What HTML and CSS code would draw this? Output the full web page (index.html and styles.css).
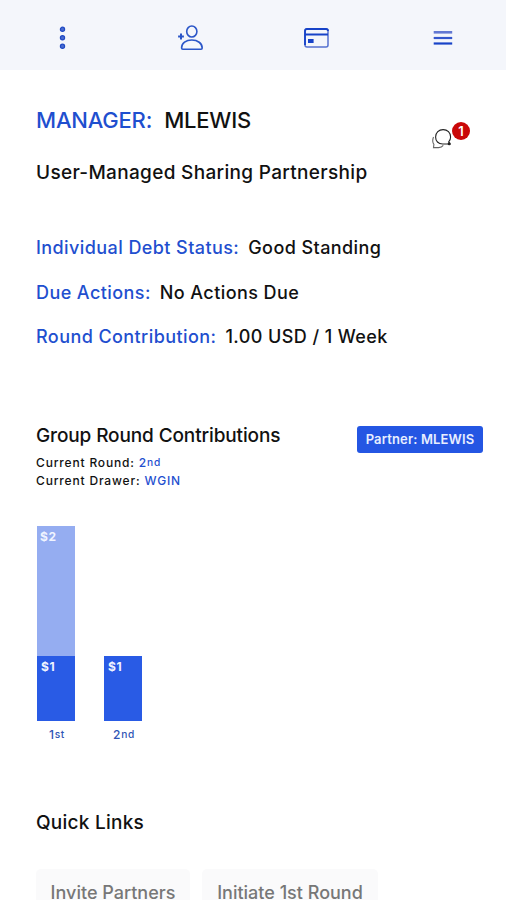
FILE: index.html
```html
<!DOCTYPE html>
<html lang="en">
<head>
  <meta charset="UTF-8" />
  <meta name="viewport" content="width=device-width, initial-scale=1.0" />
  <title>Sharing Partnership</title>
  <link rel="stylesheet" href="styles.css">
</head>
<body>
  <nav class="top-nav">
    <a class="nav-item">
      <svg width="24" height="30" viewBox="0 0 24 30" fill="#4a6ccf" stroke="#1f49c4" stroke-width="1.2">
        <circle cx="11.5" cy="6.3" r="2.1" />
        <circle cx="11.5" cy="14.8" r="2.1" />
        <circle cx="11.5" cy="23.3" r="2.1" />
      </svg>
    </a>
    <a class="nav-item">
      <svg width="30" height="30" viewBox="0 0 30 30" fill="none" stroke="#2b56c8" stroke-width="1.6">
        <ellipse cx="16.8" cy="8.5" rx="5.1" ry="5.5" />
        <path d="M6.6 25 C6.6 20.3 11 17 16.8 17 C22.6 17 27.2 20.3 27.2 25 Q27.2 26.2 26 26.2 H7.8 Q6.6 26.2 6.6 25 Z" />
        <path d="M6 10.6 V16.4 M3.1 13.5 H8.9" stroke-width="2" />
      </svg>
    </a>
    <a class="nav-item">
      <svg width="30" height="30" viewBox="0 0 30 30" fill="none">
        <rect x="4" y="6" width="23" height="18" rx="2" stroke="#5572d0" stroke-width="1.5" />
        <path d="M4 22 V8 Q4 6 6 6 H25 Q27 6 27 8 M4 11.5 H27" stroke="#1743c8" stroke-width="1.8" />
        <rect x="7" y="16" width="5.6" height="4" fill="#1743c8" />
      </svg>
    </a>
    <a class="nav-item">
      <svg width="30" height="30" viewBox="0 0 30 30">
        <path d="M5.7 9.3 H24.2" stroke="#6278d2" stroke-width="2.6" />
        <path d="M5.7 15 H24.2" stroke="#3356cc" stroke-width="2.2" />
        <path d="M5.7 20.5 H24.2" stroke="#1743c8" stroke-width="2.2" />
      </svg>
    </a>
  </nav>

  <main class="content">
    <header class="group-header">
      <div>
        <h1 class="manager"><span class="label">MANAGER:</span><span>MLEWIS</span></h1>
        <h2 class="group-type">User-Managed Sharing Partnership</h2>
      </div>
      <div class="messages">
        <svg width="22" height="22" viewBox="0 0 22 22" fill="none" stroke="#222" stroke-width="1.1">
          <path d="M18.8 17 H11.7 C7.2 17 4.6 14 4.6 10 C4.6 5.6 7.9 2.6 12.1 2.6 C16.4 2.6 19.6 5.8 19.6 10 C19.6 12 18.9 13.6 17.7 14.8 Z" />
          <path d="M2.5 10 C1.4 12.8 1.5 15.6 2.9 17.4 L2.5 20.6 H7.6 C9.7 20.6 11.4 19.6 12.3 18.4" stroke="#666" />
          <circle cx="18.2" cy="16.7" r="1" fill="#222" />
        </svg>
        <span class="badge">1</span>
      </div>
    </header>

    <section class="status">
      <p class="status-row"><span class="label">Individual Debt Status:</span><span>Good Standing</span></p>
      <p class="status-row"><span class="label">Due Actions:</span><span>No Actions Due</span></p>
      <p class="status-row"><span class="label">Round Contribution:</span><span>1.00 USD / 1 Week</span></p>
    </section>

    <section class="contributions">
      <div class="contributions-header">
        <div>
          <h3 class="section-title title-group">Group Round Contributions</h3>
          <p class="detail">Current Round: <span class="label">2<span class="ord">nd</span></span></p>
          <p class="detail">Current Drawer: <span class="label">WGIN</span></p>
        </div>
        <button class="partner">Partner: MLEWIS</button>
      </div>
      <div class="chart">
        <div class="column">
          <div class="bar bar-due">$2</div>
          <div class="bar bar-paid">$1</div>
          <div class="bar-label">1<span class="ord">st</span></div>
        </div>
        <div class="column">
          <div class="bar bar-paid">$1</div>
          <div class="bar-label">2<span class="ord">nd</span></div>
        </div>
      </div>
    </section>

    <section class="quick-links">
      <h3 class="section-title title-links">Quick Links</h3>
      <div class="links">
        <button class="link link-invite">Invite Partners</button>
        <button class="link link-initiate">Initiate 1st Round</button>
      </div>
    </section>
  </main>
</body>
</html>
```
FILE: styles.css
```css
* {
  box-sizing: border-box;
  margin: 0;
  padding: 0;
}
body {
  font-family: Inter, "Liberation Sans", sans-serif;
  font-weight: 500;
  background: #fff;
  color: #111;
  height: 900px;
  overflow: hidden;
  white-space: nowrap;
}
h1, h2, h3 {
  font-weight: 500;
}
button {
  font-family: inherit;
  border: none;
  cursor: pointer;
}
.label {
  color: #1f4fcf;
}
.top-nav {
  display: flex;
  height: 70px;
  padding-top: 23px;
  background: #f4f6fb;
}
.nav-item {
  flex: 1;
  text-align: center;
}
.nav-item svg {
  display: inline-block;
}
.content {
  padding: 35px 23px 0 36px;
}
.group-header {
  display: flex;
  justify-content: space-between;
}
.manager {
  display: flex;
  gap: 12px;
  font-size: 22px;
  line-height: 30px;
  letter-spacing: -0.2px;
}
.group-type {
  margin-top: 23px;
  font-size: 19px;
  line-height: 30px;
  letter-spacing: 0.32px;
}
.messages {
  display: flex;
  padding-top: 17px;
  margin-right: 13px;
}
.messages svg {
  margin-top: 5px;
}
.badge {
  width: 18px;
  height: 18px;
  border-radius: 50%;
  background: #c90808;
  color: #fff;
  font-size: 13px;
  font-weight: 600;
  line-height: 18px;
  text-align: center;
  margin-left: -1px;
}
.status {
  margin-top: 45px;
}
.status-row {
  display: flex;
  gap: 9px;
  height: 44.5px;
  font-size: 18px;
  line-height: 30px;
  letter-spacing: 0.42px;
}
.contributions {
  margin-top: 54px;
}
.contributions-header {
  display: flex;
  justify-content: space-between;
  align-items: flex-start;
}
.section-title {
  font-size: 19px;
  line-height: 30px;
}
.title-group {
  margin-bottom: 3px;
  letter-spacing: -0.12px;
}
.title-links {
  letter-spacing: 0.25px;
}
.detail {
  font-size: 12px;
  line-height: 18px;
  letter-spacing: 0.83px;
}
.ord {
  font-size: 0.85em;
  position: relative;
  top: -1px;
}
.partner {
  width: 126px;
  height: 27px;
  margin-top: 5px;
  border-radius: 3px;
  background: #2456e3;
  color: #e8eeff;
  font-size: 13px;
  font-weight: 600;
  letter-spacing: 0.15px;
}
.chart {
  display: flex;
  align-items: flex-end;
  gap: 29px;
  height: 222px;
  margin-top: 36px;
  padding-left: 1px;
}
.column {
  width: 38px;
}
.bar {
  padding: 3px 0 0 4px;
  color: #f0f4ff;
  font-size: 12px;
  font-weight: 700;
  line-height: 15px;
  letter-spacing: 0.7px;
}
.bar-due {
  height: 130px;
  padding-left: 3px;
  background: #95adf1;
}
.bar-paid {
  height: 65px;
  background: #295be5;
}
.bar-label {
  height: 27px;
  color: #2f55b5;
  font-size: 12px;
  line-height: 28px;
  padding-left: 2px;
  text-align: center;
  letter-spacing: 0.7px;
}
.quick-links {
  margin-top: 60px;
}
.links {
  display: flex;
  gap: 12px;
  margin-top: 31px;
}
.link {
  height: 48px;
  border-radius: 5px;
  background: #fafafb;
  color: #777;
  font-size: 18px;
  font-weight: 500;
}
.link-invite {
  width: 154px;
}
.link-initiate {
  width: 176px;
}
```
